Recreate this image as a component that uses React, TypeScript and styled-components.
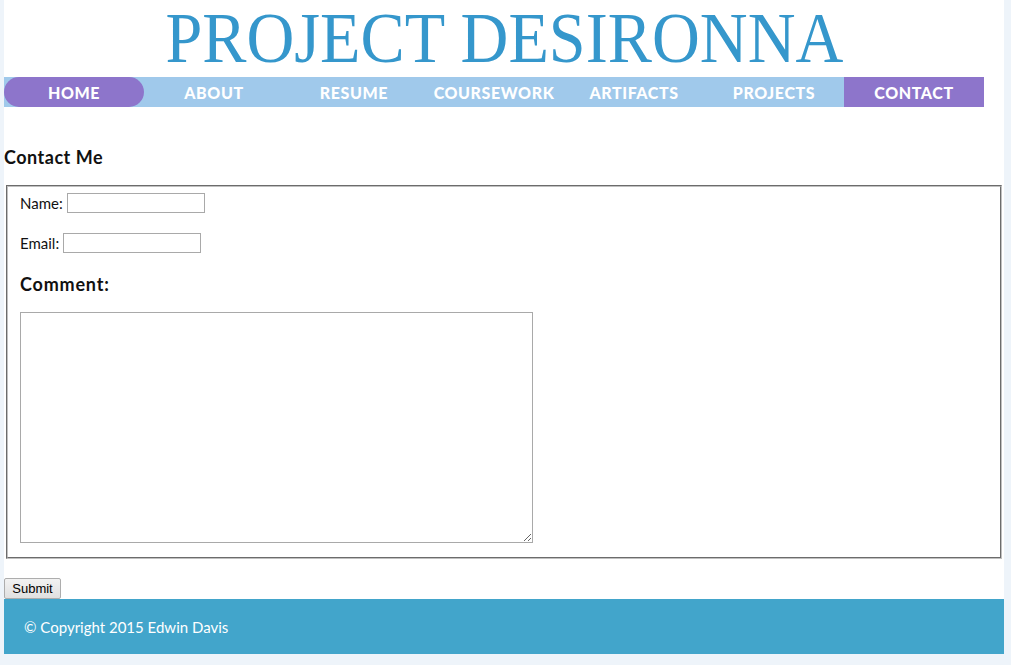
import React from "react";
import styled, { createGlobalStyle } from "styled-components";

const Global = createGlobalStyle`
  html, body { margin: 0; padding: 0; background: #eef4fa; }
  body { font-family: "Lato", "Open Sans", sans-serif; }
`;

const Page = styled.div`
  width: 1000px;
  margin-left: 4px;
  background: #ffffff;
  display: flex;
  flex-direction: column;
`;

const Title = styled.h1`
  margin: 0;
  height: 77px;
  font-family: "Liberation Serif", serif;
  font-weight: normal;
  font-size: 72px;
  line-height: 77px;
  color: #3597cc;
  text-align: center;
`;

const TitleText = styled.span`
  display: inline-block;
  transform: scaleX(0.92);
  transform-origin: center;
`;

const Nav = styled.nav`
  display: flex;
  height: 30px;
  width: 980px;
  background: #a0c9eb;
`;

const NavItem = styled.a<{ $active?: boolean; $round?: boolean }>`
  width: 140px;
  height: 30px;
  display: flex;
  align-items: center;
  justify-content: center;
  font-family: "Lato", sans-serif;
  font-weight: 900;
  font-size: 16px;
  letter-spacing: 0.6px;
  color: #ffffff;
  text-decoration: none;
  background: ${(p) => (p.$active ? "#8d75cb" : "transparent")};
  border-radius: ${(p) => (p.$round ? "15px" : "0")};
`;

const Heading = styled.h2`
  margin: 39px 0 0 0;
  font-family: "Lato", sans-serif;
  font-weight: bold;
  font-size: 18px;
  letter-spacing: 0.5px;
  line-height: 22px;
  color: #111;
`;

const Fieldset = styled.fieldset`
  margin: 17px 2px 0 2px;
  padding: 6px 12px 14px 12px;
  border: 2px groove #c0c0c0;
  font-family: "Lato", sans-serif;
  font-size: 15px;
  color: #111;
  display: flex;
  flex-direction: column;
  align-items: flex-start;
`;

const Row = styled.label`
  display: flex;
  align-items: center;
  gap: 4px;
  margin-bottom: 20px;
`;

const TextInput = styled.input<{ $w: number }>`
  width: ${(p) => p.$w}px;
  height: 20px;
  box-sizing: border-box;
  border: 1px solid #a9a9a9;
  padding: 0 2px;
  margin: 0;
`;

const SubHeading = styled.h3`
  margin: 0 0 17px 0;
  font-size: 18px;
  letter-spacing: 0.8px;
  line-height: 22px;
  font-weight: bold;
`;

const TextArea = styled.textarea`
  width: 513px;
  height: 231px;
  box-sizing: border-box;
  border: 1px solid #a9a9a9;
  margin: 0;
  resize: both;
`;

const Submit = styled.button`
  margin-top: 19px;
  align-self: flex-start;
  width: 57px;
  height: 21px;
  padding: 0;
  font-family: "Liberation Sans", Arial, sans-serif;
  font-size: 13px;
  color: #000;
  border: 1px solid #adadad;
  border-radius: 2px;
  background: linear-gradient(#f2f2f2, #e0e0e0);
`;

const Footer = styled.footer`
  height: 55px;
  background: #42a5cb;
  display: flex;
  align-items: center;
  padding-left: 20px;
  color: #fff;
  font-family: "Lato", sans-serif;
  font-size: 15px;
`;

export default function App() {
  return (
    <>
      <Global />
      <Page>
        <Title>
          <TitleText>PROJECT DESIRONNA</TitleText>
        </Title>
        <Nav>
          <NavItem $active $round href="#">HOME</NavItem>
          <NavItem href="#">ABOUT</NavItem>
          <NavItem href="#">RESUME</NavItem>
          <NavItem href="#">COURSEWORK</NavItem>
          <NavItem href="#">ARTIFACTS</NavItem>
          <NavItem href="#">PROJECTS</NavItem>
          <NavItem $active href="#">CONTACT</NavItem>
        </Nav>
        <Heading>Contact Me</Heading>
        <Fieldset>
          <Row>
            Name: <TextInput $w={138} type="text" />
          </Row>
          <Row>
            Email: <TextInput $w={138} type="text" />
          </Row>
          <SubHeading>Comment:</SubHeading>
          <TextArea />
        </Fieldset>
        <Submit>Submit</Submit>
        <Footer>© Copyright 2015 Edwin Davis</Footer>
      </Page>
    </>
  );
}
